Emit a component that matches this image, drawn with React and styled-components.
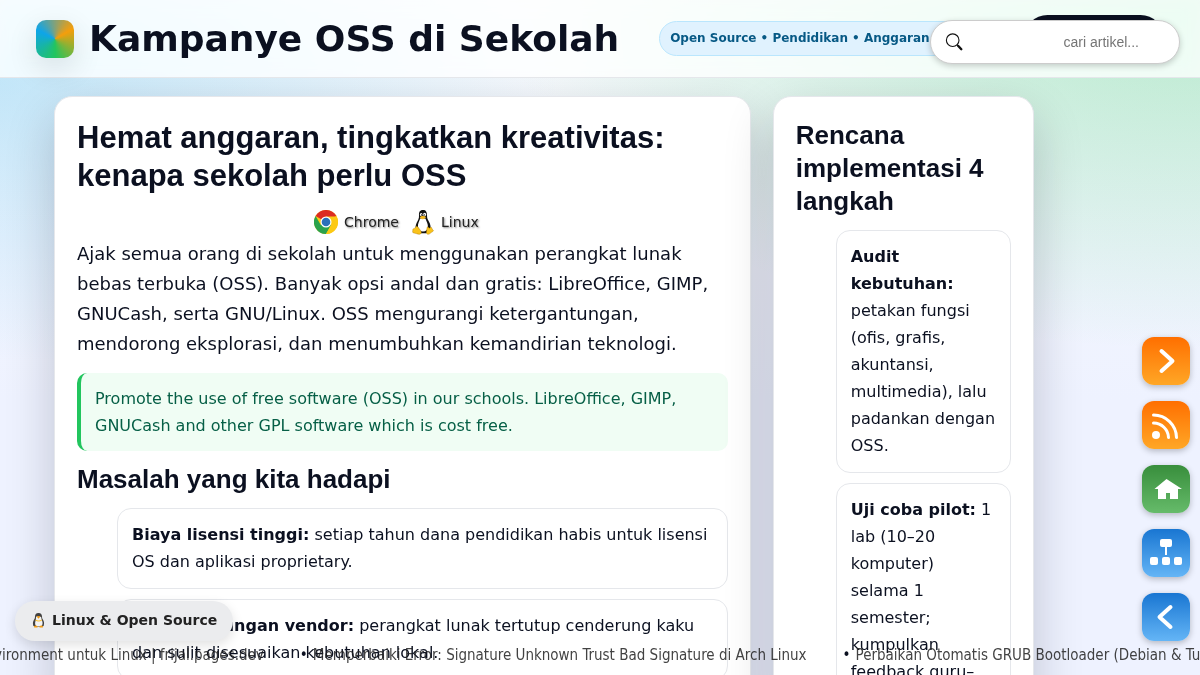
import React from "react";
import styled, { createGlobalStyle, css } from "styled-components";

const sans = `"DejaVu Sans", Verdana, sans-serif`;
const heading = `"Liberation Sans", Arial, sans-serif`;

const GlobalStyle = createGlobalStyle`
  *, *::before, *::after { box-sizing: border-box; }
  body {
    margin: 0;
    min-height: 100vh;
    color: #0b1020;
    font: 16px/27px ${sans};
    background:
      radial-gradient(1000px 500px at 100% 0%, rgba(34, 197, 94, 0.3), transparent 70%) no-repeat,
      radial-gradient(800px 400px at 0% 10%, rgba(14, 165, 233, 0.22), transparent 70%) no-repeat,
      linear-gradient(180deg, #f8fafc, #eef2ff 400px) #eef2ff;
  }
`;

const Header = styled.header`
  position: sticky;
  top: 0;
  z-index: 10;
  display: flex;
  align-items: center;
  gap: 40px;
  height: 78px;
  padding: 0 36px;
  background: rgba(255, 255, 255, 0.8);
  backdrop-filter: saturate(1.6) blur(8px);
  border-bottom: 1px solid #e5e7eb;
`;

const Brand = styled.div`
  display: flex;
  align-items: center;
  gap: 15px;
  font-size: 36px;
  line-height: 44px;
  font-weight: 700;
  white-space: nowrap;
`;

const Logo = styled.span`
  width: 38px;
  height: 38px;
  border-radius: 10px;
  background: conic-gradient(from 60deg, #f59e0b, #22c55e 33%, #0ea5e9 66%, #f59e0b);
  box-shadow: 0 10px 30px rgba(2, 6, 23, 0.12);
`;

const Badge = styled.span`
  flex: 1;
  padding: 3px 10px;
  border: 1px solid #bae6fd;
  border-radius: 999px;
  background: #e0f2fe;
  color: #075985;
  font-size: 12px;
  font-weight: 700;
  white-space: nowrap;
`;

const Cta = styled.a`
  flex: none;
  width: 140px;
  height: 47px;
  border-radius: 999px;
  background: #0b1020;
`;

const Search = styled.form`
  position: fixed;
  z-index: 20;
  top: 20px;
  right: 20px;
  display: flex;
  align-items: center;
  width: 250px;
  height: 44px;
  padding: 0 40px 0 14px;
  border: 1px solid #cccccc;
  border-radius: 999px;
  background: #ffffff;
  box-shadow: 0 2px 6px rgba(0, 0, 0, 0.2);

  button {
    display: flex;
    padding: 0;
    border: 0;
    background: none;
  }
  input {
    flex: 1;
    min-width: 0;
    padding: 0;
    border: 0;
    outline: 0;
    background: none;
    text-align: right;
    font: 14px/20px ${heading};
  }
  input::placeholder { color: #757575; }
`;

const Page = styled.main`
  display: grid;
  grid-template-columns: 8fr 3fr;
  align-items: start;
  gap: 22px;
  padding: 18px 166px 80px 54px;
`;

const Card = styled.section`
  padding: 22px;
  border: 1px solid #e5e7eb;
  border-radius: 18px;
  background: #ffffff;
  box-shadow: 0 20px 50px rgba(2, 6, 23, 0.2);
`;

const Title = styled.h1`
  margin: 0 0 14px;
  font: 700 31px/38px ${heading};
`;

const Subtitle = styled.h2`
  margin: 0 0 12px;
  font: 700 26px/33px ${heading};
`;

const Apps = styled.div`
  display: flex;
  justify-content: center;
`;

const AppTag = styled.span`
  display: flex;
  align-items: center;
  gap: 6px;
  margin-right: 12px;
  font-size: 14px;
  line-height: 24px;
  color: #222222;
  text-shadow: 1px 1px 2px rgba(0, 0, 0, 0.5);
`;

const Lead = styled.p`
  margin: 4px 0 14px;
  font-size: 18px;
  line-height: 30px;
`;

const Callout = styled.p`
  margin: 0 0 12px;
  padding: 12px 14px;
  border-left: 4px solid #22c55e;
  border-radius: 10px;
  background: #f0fdf4;
  color: #065f46;
`;

const List = styled.ul`
  display: grid;
  gap: 10px;
  margin: 0;
  padding: 0 0 0 40px;
  list-style: none;
`;

const Item = styled.li`
  padding: 12px 14px 13px;
  border: 1px solid #e5e7eb;
  border-radius: 14px;
  background: #ffffff;
`;

const SideNav = styled.nav`
  position: fixed;
  z-index: 15;
  right: 10px;
  bottom: 34px;
  display: grid;
  gap: 16px;
`;

const tones = {
  orange: css`background: linear-gradient(#ff6f00, #ffa726);`,
  green: css`background: linear-gradient(#388e3c, #66bb6a);`,
  blue: css`background: linear-gradient(#1976d2, #64b5f6);`,
};

const SideLink = styled.a`
  display: block;
  width: 48px;
  height: 48px;
  border-radius: 12px;
  box-shadow: 0 2px 6px rgba(0, 0, 0, 0.25);
  ${(p) => tones[p.$tone]}
  svg { display: block; }
`;

const Pill = styled.a`
  position: fixed;
  z-index: 12;
  left: 15px;
  bottom: 34px;
  display: flex;
  align-items: center;
  gap: 6px;
  height: 40px;
  padding: 0 16px 2px;
  border-radius: 999px;
  background: #ebecee;
  box-shadow: 0 4px 12px rgba(0, 0, 0, 0.12);
  color: #222222;
  font-size: 14px;
  font-weight: 700;
  text-decoration: none;
`;

const Ticker = styled.div`
  position: fixed;
  z-index: 11;
  left: 0;
  right: 0;
  bottom: 8px;
  overflow: hidden;
  pointer-events: none;
`;

const TickerTrack = styled.ul`
  display: flex;
  gap: 36px;
  width: max-content;
  margin: 0 0 0 -96px;
  padding: 0;
  list-style: none;
  font: 15px/24px "DejaVu Sans Condensed", "DejaVu Sans", sans-serif;
  color: #0b1020;
  white-space: nowrap;

  li { display: flex; gap: 5px; }
  a { color: #222222; opacity: 0.85; text-decoration: none; }
`;

const Tux = ({ width, height }) => (
  <svg width={width} height={height} viewBox="0 0 22 26" aria-hidden="true">
    <path d="M11 1C7.600 1 6.800 3.400 7 6.500c.2 3.200-1 4.500-2.300 7.300C3.500 16.500 3 19 4.300 21.500L9 24.200h5l4-2.700c1.200-3 .5-6-1-8.700-1.400-2.500-2-3.500-2-6.500C15 3 14 1 11 1z" fill="#111" />
    <path d="M8.200 9.500C7 12.500 5.600 15 6 18c.3 2.500 2 4.600 5 4.600s4.700-2 4.900-4.600c.2-3-1.300-5.500-2.500-8.500z" fill="#fff" />
    <ellipse cx="9.200" cy="5.600" rx="1.300" ry="1.700" fill="#fff" />
    <ellipse cx="12.600" cy="5.600" rx="1.500" ry="1.800" fill="#fff" />
    <circle cx="9.600" cy="5.900" r=".7" />
    <circle cx="12.300" cy="5.900" r=".7" />
    <path d="M7.800 8.200C9 6.700 12 6.500 14 8c-.8 1.400-2.300 2.200-3.400 2.200S8.300 9.400 7.800 8.200z" fill="#f5b81c" />
    <path d="M4.500 17.200c1.300-.2 2.400 2.300 4 4.200 1.500 1.900.8 3.900-1.200 3.900-1.800 0-3.400-1.100-5.600-1.400-1.600-.2-1-1.500-.9-2.700 0-1.300.3-1.500 1.500-1.700 1-.2 1.200-2.100 2.200-2.300z" fill="#f9c21a" stroke="#a87500" strokeWidth=".4" />
    <path d="M15 19c.2-1.500 1-1.500 1.300-.7.500 1.200 2 1.100 2.600-.3 1 .2 1 2 1.700 2.600 1.300 1 1 1.500-.3 2.200-1.700.9-2.500 2.500-4.200 2.500-1.900 0-1.800-1.500-1.500-3.200.2-1 .3-2 .4-3.100z" fill="#f9c21a" stroke="#a87500" strokeWidth=".4" />
  </svg>
);

const Penguin = () => (
  <svg width="15" height="16" viewBox="0 0 15 16" aria-hidden="true">
    <path d="M7.500 1C5 1 4 2.700 4 4.600c0 1.800-.6 2.600-1.500 4.200C1.700 10.400 1.800 12 2.400 14l2.600 1h5l2.600-1c.6-2 .7-3.600-.1-5.200C11.600 7.200 11 6.400 11 4.600 11 2.700 10 1 7.500 1z" fill="#424242" />
    <path d="M5.300 4.800c.8-.8 1.500-.5 2.200 0 .7-.5 1.800-.6 2.500.2.700.9.200 2 1 3.600 1 2.200.8 4.600-.8 6H5.600C3.800 13.200 3.800 10.800 4.600 8.800c.7-1.700 0-3 .7-4z" fill="#f3f3f3" />
    <path d="M4.700 7.400c1.700 1.300 4.300 1.300 5.900 0l.4 1.200c-1.900 1.300-4.800 1.300-6.700 0z" fill="#fbc02d" />
    <path d="M5.600 4.600 7.500 4l1.900.6-1.900 2.100z" fill="#f39c12" />
    <path d="M3 14.200c1-.9 2.800-.7 3.500.1v1.200H3.200zM8.500 14.300c.8-.8 2.500-1 3.500-.1l-.2 1.300H8.500z" fill="#f39c12" />
  </svg>
);

const Chrome = () => (
  <svg width="24" height="24" viewBox="0 0 24 24" aria-hidden="true">
    <circle cx="12" cy="12" r="12" fill="#fcc914" />
    <path d="M12 12 1.600 6A12 12 0 0 1 22.400 6z" fill="#dc2c22" />
    <path d="M1.600 6A12 12 0 0 0 12 24l5.200-9L12 12 6.800 15z" fill="#2ba24c" />
    <path d="M12 6.500H22.700A12 12 0 0 1 12 24l5-9z" fill="#fcc914" />
    <circle cx="12" cy="12" r="5.500" fill="#fff" />
    <circle cx="12" cy="12" r="4.300" fill="#2a6fb8" />
  </svg>
);

const stroke = { fill: "none", stroke: "#fff", strokeLinecap: "round", strokeLinejoin: "round" };

const icons = {
  next: <path d="M19.500 14l11 10-11 10" strokeWidth="4" {...stroke} />,
  prev: <path d="M28.500 14l-11 10 11 10" strokeWidth="4" {...stroke} />,
  feed: (
    <>
      <circle cx="14" cy="34" r="4" fill="#fff" />
      <path d="M11.500 22a15 15 0 0 1 15 14.500M11.500 14a23 23 0 0 1 23 22.500" strokeWidth="3" {...stroke} />
    </>
  ),
  home: <path d="M24.500 14L12.500 24H16v10h8v-6h4v6h8V24h4z" fill="#fff" />,
  sitemap: (
    <g fill="#fff">
      <rect x="18" y="10" width="12" height="8" rx="2" />
      <rect x="23" y="17" width="2" height="9" />
      <rect x="8" y="28" width="8" height="8" rx="2" />
      <rect x="20" y="28" width="8" height="8" rx="2" />
      <rect x="32" y="28" width="8" height="8" rx="2" />
    </g>
  ),
};

const sideLinks = [
  ["next", "orange", "Berikutnya"],
  ["feed", "orange", "RSS"],
  ["home", "green", "Beranda"],
  ["sitemap", "blue", "Peta situs"],
  ["prev", "blue", "Sebelumnya"],
];

const problems = [
  ["Biaya lisensi tinggi:", "setiap tahun dana pendidikan habis untuk lisensi OS dan aplikasi proprietary."],
  ["Ketergantungan vendor:", "perangkat lunak tertutup cenderung kaku dan sulit disesuaikan kebutuhan lokal."],
];

const steps = [
  ["Audit kebutuhan:", "petakan fungsi (ofis, grafis, akuntansi, multimedia), lalu padankan dengan OSS."],
  ["Uji coba pilot:", "1 lab (10–20 komputer) selama 1 semester; kumpulkan feedback guru–siswa."],
];

const news = [
  "Desktop Environment untuk Linux | frijal.pages.dev",
  "Memperbaiki Error: Signature Unknown Trust Bad Signature di Arch Linux",
  "Perbaikan Otomatis GRUB Bootloader (Debian & Turunannya)",
];

const Items = ({ rows }) => (
  <List>
    {rows.map(([term, text]) => (
      <Item key={term}>
        <strong>{term}</strong> {text}
      </Item>
    ))}
  </List>
);

export default function App() {
  return (
    <>
      <GlobalStyle />
      <Header>
        <Brand>
          <Logo />
          Kampanye OSS di Sekolah
        </Brand>
        <Badge>Open Source • Pendidikan • Anggaran</Badge>
        <Cta href="#rencana" aria-label="Lihat rencana" />
      </Header>

      <Search role="search">
        <button type="button" aria-label="Cari">
          <svg width="18" height="18" viewBox="0 0 18 18" fill="none" stroke="#111">
            <circle cx="7.700" cy="7.200" r="6.300" strokeWidth="1.100" />
            <path d="M12 11.800l1.500 1.500" strokeWidth="1.500" />
            <path d="M13.300 13l3 3.200" strokeWidth="2.400" strokeLinecap="round" />
          </svg>
        </button>
        <input type="text" placeholder="cari artikel..." aria-label="Cari artikel" />
      </Search>

      <Page>
        <Card>
          <Title>Hemat anggaran, tingkatkan kreativitas: kenapa sekolah perlu OSS</Title>
          <Apps>
            <AppTag><Chrome />Chrome</AppTag>
            <AppTag><Tux width={24} height={26} />Linux</AppTag>
          </Apps>
          <Lead>
            Ajak semua orang di sekolah untuk menggunakan perangkat lunak bebas terbuka (OSS). Banyak opsi
            andal dan gratis: LibreOffice, GIMP, GNUCash, serta GNU/Linux. OSS mengurangi ketergantungan,
            mendorong eksplorasi, dan menumbuhkan kemandirian teknologi.
          </Lead>
          <Callout>
            Promote the use of free software (OSS) in our schools. LibreOffice, GIMP, GNUCash and other GPL
            software which is cost free.
          </Callout>
          <Subtitle>Masalah yang kita hadapi</Subtitle>
          <Items rows={problems} />
        </Card>

        <Card as="aside" id="rencana">
          <Subtitle>Rencana implementasi 4 langkah</Subtitle>
          <Items rows={steps} />
        </Card>
      </Page>

      <SideNav aria-label="Navigasi artikel">
        {sideLinks.map(([icon, tone, label]) => (
          <SideLink key={icon} href={`#${icon}`} $tone={tone} aria-label={label}>
            <svg width="48" height="48" viewBox="0 0 48 48" aria-hidden="true">{icons[icon]}</svg>
          </SideLink>
        ))}
      </SideNav>

      <Ticker>
        <TickerTrack>
          {news.map((title) => (
            <li key={title}>
              <span>•</span>
              <a href="#artikel">{title}</a>
            </li>
          ))}
        </TickerTrack>
      </Ticker>

      <Pill href="#linux">
        <Penguin />
        Linux &amp; Open Source
      </Pill>
    </>
  );
}
